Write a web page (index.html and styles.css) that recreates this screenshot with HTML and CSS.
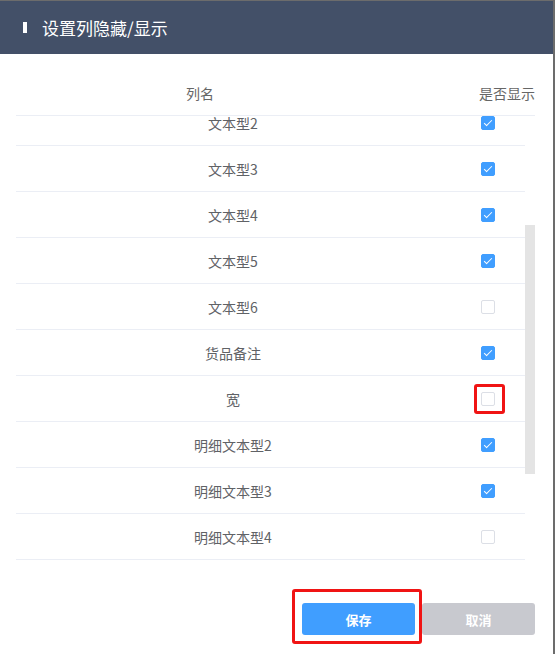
FILE: index.html
```html
<!DOCTYPE html>
<html lang="zh">
<head>
<meta charset="utf-8">
<title>设置列隐藏/显示</title>
<link rel="stylesheet" href="styles.css">
</head>
<body>
<div class="dialog">
  <div class="dialog-header">
    <span class="title-bar"></span>
    <span class="title">设置列隐藏/显示</span>
  </div>
  <div class="dialog-body">
    <div class="thead">
      <div class="th th-name">列名</div>
      <div class="th th-show">是否显示</div>
    </div>
    <div class="tbody">
      <div class="rows">
        <div class="rows-inner">
          <div class="row"><div class="cell-name">文本型2</div><div class="cell-check"><span class="cb checked"></span></div></div>
          <div class="row"><div class="cell-name">文本型3</div><div class="cell-check"><span class="cb checked"></span></div></div>
          <div class="row"><div class="cell-name">文本型4</div><div class="cell-check"><span class="cb checked"></span></div></div>
          <div class="row"><div class="cell-name">文本型5</div><div class="cell-check"><span class="cb checked"></span></div></div>
          <div class="row"><div class="cell-name">文本型6</div><div class="cell-check"><span class="cb"></span></div></div>
          <div class="row"><div class="cell-name">货品备注</div><div class="cell-check"><span class="cb checked"></span></div></div>
          <div class="row"><div class="cell-name">宽</div><div class="cell-check"><span class="cb-wrap"><span class="cb"></span><span class="mark mark-cb"></span></span></div></div>
          <div class="row"><div class="cell-name">明细文本型2</div><div class="cell-check"><span class="cb checked"></span></div></div>
          <div class="row"><div class="cell-name">明细文本型3</div><div class="cell-check"><span class="cb checked"></span></div></div>
          <div class="row"><div class="cell-name">明细文本型4</div><div class="cell-check"><span class="cb"></span></div></div>
        </div>
      </div>
      <div class="scroll-track"><div class="scroll-thumb"></div></div>
    </div>
    <div class="footer">
      <span class="btn-wrap">
        <button class="btn btn-primary">保存</button>
        <span class="mark mark-btn"></span>
      </span>
      <button class="btn btn-cancel">取消</button>
    </div>
  </div>
</div>
</body>
</html>
```

FILE: styles.css
```css
* { box-sizing: border-box; }
html, body { margin: 0; padding: 0; background: #fff; }
body {
  font-family: "Noto Sans CJK SC", "Noto Sans", sans-serif;
  color: #606266;
}
.dialog {
  width: 555px;
  height: 654px;
  border-top: 1px solid #6c6c6c;
  border-right: 2px solid #6c6c6c;
  background: #fff;
}
.dialog-header {
  height: 53px;
  background: #435068;
  display: flex;
  align-items: center;
  padding-left: 23px;
}
.title-bar {
  width: 4px;
  height: 11px;
  background: #fff;
  margin-right: 15px;
}
.title {
  color: #fff;
  font-size: 17px;
  line-height: 20px;
}
.dialog-body {
  padding: 0 18px 0 16px;
}
.thead {
  height: 62px;
  display: flex;
  align-items: flex-end;
  padding-bottom: 12px;
  border-bottom: 1px solid #ebeef5;
  font-size: 14px;
  line-height: 20px;
  color: #666;
}
.th-name { width: 368px; text-align: center; }
.th-show { flex: 1; text-align: right; }
.tbody {
  display: flex;
  height: 444px;
}
.rows {
  flex: 1;
  overflow: hidden;
}
.rows-inner { margin-top: -16px; }
.row {
  height: 46px;
  display: flex;
  align-items: center;
  border-bottom: 1px solid #ebeef5;
  font-size: 14px;
}
.cell-name { width: 434px; text-align: center; }
.cell-check {
  flex: 1;
  display: flex;
  justify-content: center;
}
.cb {
  display: block;
  width: 14px;
  height: 14px;
  border: 1px solid #dcdfe6;
  border-radius: 2px;
  background: #fff;
  position: relative;
}
.cb.checked {
  background: #409eff;
  border-color: #409eff;
}
.cb.checked::after {
  content: "";
  position: absolute;
  left: 4px;
  top: 1px;
  width: 3px;
  height: 7px;
  border: 1px solid #fff;
  border-left: 0;
  border-top: 0;
  transform: rotate(45deg);
}
.cb-wrap { position: relative; display: block; }
.mark {
  position: absolute;
  border: 3px solid #f01414;
  border-radius: 3px;
}
.mark-cb {
  left: -7px;
  top: -8px;
  width: 31px;
  height: 30px;
}
.scroll-track {
  width: 10px;
  padding-top: 109px;
}
.scroll-thumb {
  height: 249px;
  background: #e4e4e4;
}
.footer {
  display: flex;
  justify-content: flex-end;
  gap: 7px;
  padding-top: 43px;
}
.btn {
  width: 113px;
  height: 32px;
  border: 0;
  border-radius: 3px;
  color: #fff;
  font-family: "Noto Sans CJK SC", sans-serif;
  font-size: 13px;
  font-weight: bold;
  padding: 0;
}
.btn-primary { background: #409eff; }
.btn-cancel { background: #c8c9cf; }
.btn-wrap { position: relative; display: block; }
.mark-btn {
  left: -10px;
  top: -14px;
  width: 130px;
  height: 55px;
}
```
